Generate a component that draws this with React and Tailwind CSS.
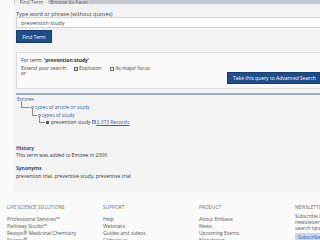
export default function App() {
  return (
    <div className="w-[320px] h-[240px] overflow-hidden bg-[#fafafa] text-[#3a3a3a] font-['Open_Sans','Liberation_Sans',sans-serif]">
      <div className="ml-[14px] w-[330px] h-[192px] bg-[#f3f3f3] overflow-hidden">
        {/* tabs */}
        <div className="h-[4px] bg-[#c5c8cd] flex items-end overflow-hidden">
          <div className="ml-[1px] w-[33px] h-[4px] bg-[#eeeff1] flex items-end justify-center">
            <span className="text-[5px] leading-[5px] text-[#555] -mb-[1px] whitespace-nowrap">Find Term</span>
          </div>
          <div className="ml-[1px] w-[40px] h-[4px] bg-[#cfd1d5] flex items-end justify-center">
            <span className="text-[5px] leading-[5px] text-[#666] -mb-[1px] whitespace-nowrap">Browse by Facet</span>
          </div>
        </div>
        <div className="px-[2px]">
          <div className="mt-[7px] text-[5.5px] leading-[6px] text-[#444] whitespace-nowrap">Type word or phrase (without quotes)</div>
          <div className="w-[330px] h-[11px] border border-[#d2d2d2] bg-white flex items-center pl-[4px]">
            <span className="text-[5.5px] leading-[6px] text-[#444]">prevention study</span>
          </div>
          <div className="mt-[2px] w-[36px] h-[13px] bg-[#1e4d8c] border border-[#163d70] flex items-center justify-center">
            <span className="text-[5px] leading-[6px] text-white whitespace-nowrap">Find Term</span>
          </div>
          {/* query box */}
          <div className="mt-[9px] w-[311px] h-[37px] border border-[#dcdcdc] bg-[#f9f9f9] px-[4px] pt-[4px]">
            <div className="text-[5px] leading-[6px] text-[#333] whitespace-nowrap">
              For term: <span className="font-bold">'prevention study'</span>
            </div>
            <div className="mt-[3px] flex items-start">
              <div className="w-[53px] text-[5px] leading-[5px] text-[#444] whitespace-nowrap">Extend your search:<br />or</div>
              <div className="flex items-center h-[5px]">
                <div className="w-[4px] h-[4px] border border-[#666] bg-white flex items-center justify-center">
                  <svg width="4" height="4" viewBox="0 0 4 4"><path d="M0.5 2 L1.5 3.2 L3.6 0.3" stroke="#222" strokeWidth="0.7" fill="none" /></svg>
                </div>
                <span className="ml-[1px] text-[5px] leading-[5px] text-[#444]">Explosion</span>
                <div className="ml-[9px] w-[4px] h-[4px] border border-[#666] bg-white" />
                <span className="ml-[1px] text-[5px] leading-[5px] text-[#444] whitespace-nowrap">As major focus</span>
              </div>
              <div className="ml-auto mt-[6px] w-[95px] h-[12px] bg-[#1e4d8c] border border-[#163d70] flex items-center justify-center">
                <span className="text-[5px] leading-[6px] text-white whitespace-nowrap">Take this query to Advanced Search</span>
              </div>
            </div>
          </div>
          <div className="mt-[4px] h-[2px] bg-[#9aabc0]" />
          {/* tree */}
          <div className="mt-[1px] pl-[1px] text-[5px] leading-[6px] text-[#2f5fa6]">Emtree</div>
          <div className="mt-[2px] ml-[5px] flex items-start h-[7.5px]">
            <div className="-mt-[3px] w-[9px] h-[7px] border-l border-b border-[#8c8c8c]" />
            <div className="mt-[2px] ml-[1px] w-[3px] h-[3px] rounded-full border-[0.6px] border-[#666]" />
            <span className="ml-[1px] text-[5px] leading-[7px] text-[#2f5fa6] whitespace-nowrap">types of article or study</span>
          </div>
          <div className="ml-[16px] flex items-start h-[7.5px]">
            <div className="-mt-[3px] w-[5px] h-[7px] border-l border-b border-[#8c8c8c]" />
            <div className="mt-[2px] ml-[1px] w-[3px] h-[3px] rounded-full border-[0.6px] border-[#666]" />
            <span className="ml-[1px] text-[5px] leading-[7px] text-[#2f5fa6] whitespace-nowrap">types of study</span>
          </div>
          <div className="ml-[23px] flex items-start h-[7.5px]">
            <div className="-mt-[3px] w-[6px] h-[7px] border-l border-b border-[#8c8c8c]" />
            <div className="mt-[2px] ml-[1px] w-[3px] h-[3px] bg-[#555]" />
            <span className="ml-[2px] text-[5px] leading-[7px] text-[#333] whitespace-nowrap">prevention study</span>
            <svg className="ml-[1px] mt-[1px]" width="4" height="4" viewBox="0 0 4 4">
              <rect x="0.4" y="0.4" width="3.2" height="3.2" fill="none" stroke="#2f5fa6" strokeWidth="0.6" />
              <path d="M1.4 1.2 L2.6 1.2 L2.6 2.6" stroke="#2f5fa6" strokeWidth="0.5" fill="none" />
            </svg>
            <span className="ml-[1px] text-[5px] leading-[7px] text-[#2f5fa6] underline whitespace-nowrap">2,373 Records</span>
          </div>
          {/* history */}
          <div className="mt-[18px] text-[5px] leading-[6px] font-bold text-[#2a4f8c]">History</div>
          <div className="mt-[1px] text-[5px] leading-[6px] text-[#333] whitespace-nowrap">This term was added to Emtree in 2006</div>
          <div className="mt-[7px] text-[5px] leading-[6px] font-bold text-[#2a4f8c]">Synonyms</div>
          <div className="mt-[2px] text-[5px] leading-[6px] text-[#333] whitespace-nowrap">prevention trial, preventive study, preventive trial</div>
        </div>
      </div>
      {/* footer */}
      <div className="pl-[7px] pt-[12px] flex">
        <div className="w-[96px] shrink-0">
          <div className="text-[4.5px] leading-[6px] tracking-[0.2px] text-[#666] whitespace-nowrap">LIFE SCIENCE SOLUTIONS</div>
          <div className="mt-[6px] text-[5px] leading-[7px] text-[#555] whitespace-nowrap">
            <div>Professional Services™</div>
            <div>Pathway Studio™</div>
            <div>Reaxys® Medicinal Chemistry</div>
            <div>Reaxys®</div>
          </div>
        </div>
        <div className="w-[96px] shrink-0">
          <div className="text-[4.5px] leading-[6px] tracking-[0.2px] text-[#666] whitespace-nowrap">SUPPORT</div>
          <div className="mt-[6px] text-[5px] leading-[7px] text-[#555] whitespace-nowrap">
            <div>Help</div>
            <div>Webinars</div>
            <div>Guides and videos</div>
            <div>Contact us</div>
          </div>
        </div>
        <div className="w-[96px] shrink-0">
          <div className="text-[4.5px] leading-[6px] tracking-[0.2px] text-[#666] whitespace-nowrap">PRODUCT</div>
          <div className="mt-[6px] text-[5px] leading-[7px] text-[#555] whitespace-nowrap">
            <div>About Embase</div>
            <div>News</div>
            <div>Upcoming Events</div>
            <div>Newsletter</div>
          </div>
        </div>
        <div className="w-[96px] shrink-0">
          <div className="text-[4.5px] leading-[6px] tracking-[0.2px] text-[#666] whitespace-nowrap">NEWSLETTER</div>
          <div className="mt-[3px] text-[5px] leading-[6px] text-[#555] whitespace-nowrap">
            <div>Subscribe to our</div>
            <div>newsletter for</div>
            <div>search tips and</div>
          </div>
          <div className="mt-[2px] w-[40px] h-[8px] bg-[#c9d8ee] flex items-center pl-[3px]">
            <span className="text-[5px] leading-[6px] text-[#2f5fa6] whitespace-nowrap">Subscribe here</span>
          </div>
        </div>
      </div>
    </div>
  );
}
